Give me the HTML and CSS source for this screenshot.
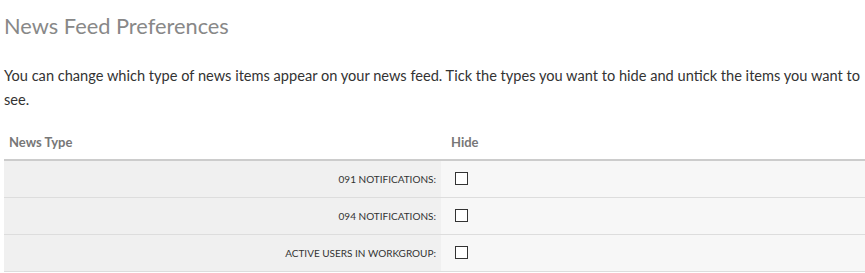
FILE: index.html
```html
<html lang="en">
<head>
    <meta charset="UTF-8">
    <title>News Feed Preferences</title>
    <link rel="stylesheet" href="styles.css">
</head>
<body>
<div id="page">
    <h1 class="page-title">News Feed Preferences</h1>
    <p class="intro">You can change which type of news items appear on your news feed. Tick the types you want to hide and untick the items you want to see.</p>

    <table class="prefs">
        <tr>
            <th class="type-head">News Type</th>
            <th class="hide-head">Hide</th>
        </tr>
        <tr>
            <td class="label">091 Notifications:</td>
            <td class="check"><span class="box"></span></td>
        </tr>
        <tr>
            <td class="label">094 Notifications:</td>
            <td class="check"><span class="box"></span></td>
        </tr>
        <tr>
            <td class="label">Active Users in Workgroup:</td>
            <td class="check"><span class="box"></span></td>
        </tr>
    </table>
</div>
</body>
</html>
```

FILE: styles.css
```css
html, body {
    overflow: hidden;
}

body {
    margin: 0;
    padding: 0 0 0 4px;
    font-family: Lato, "Open Sans", sans-serif;
    color: #333;
    background: #fff;
}

.page-title {
    margin: 0;
    padding-top: 12px;
    font-size: 21.8px;
    font-weight: normal;
    line-height: 28px;
    color: #888;
}

.intro {
    margin: 24px -10px 0 0;
    font-size: 14.6px;
    line-height: 24px;
    color: #333;
}

.prefs {
    margin-top: 13px;
    width: 861px;
    border-collapse: collapse;
    table-layout: fixed;
}

.prefs th {
    text-align: left;
    font-size: 13px;
    font-weight: bold;
    color: #777;
    height: 35px;
    padding: 0;
    border-bottom: 2px solid #ccc;
}

.type-head {
    width: 432px;
    padding-left: 5px !important;
}

.hide-head {
    padding-left: 10px !important;
}

.prefs td {
    height: 37px;
    padding: 0;
    border-bottom: 1px solid #ddd;
}

.label {
    background: #f0f0f0;
    text-align: right;
    text-transform: uppercase;
    font-size: 10px;
    padding-right: 5px !important;
}

.check {
    background: #f7f7f7;
    padding-left: 14px !important;
}

.box {
    display: block;
    width: 11px;
    height: 11px;
    border: 1px solid #333;
    background: #fff;
}
```
